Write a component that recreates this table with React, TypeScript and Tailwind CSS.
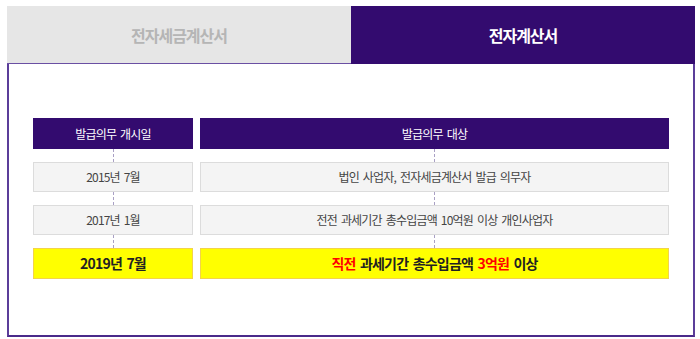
import React from "react";

const font = { fontFamily: '"Noto Sans CJK KR", "Noto Sans", sans-serif' };

function Connector({ left }: { left: boolean }) {
  return (
    <div className="flex h-[13px] gap-[7px]">
      <div className="flex w-[160px] justify-center">
        {left && <div className="h-full border-l border-dashed border-[#a9a0c4]" />}
      </div>
      <div className="flex flex-1 justify-center">
        <div className="h-full border-l border-dashed border-[#a9a0c4]" />
      </div>
    </div>
  );
}

function Row({ date, target }: { date: string; target: string }) {
  return (
    <div className="flex h-[30px] gap-[7px] text-[12px] tracking-[-0.8px] [word-spacing:2px] text-[#444]">
      <div className="flex w-[160px] items-center justify-center border border-[#dcdcdc] bg-[#f4f4f4]">
        {date}
      </div>
      <div className="flex flex-1 items-center justify-center border border-[#dcdcdc] bg-[#f4f4f4]">
        {target}
      </div>
    </div>
  );
}

export default function App() {
  return (
    <div className="h-[339px] w-[700px] bg-white pt-[6px] pl-[7px] pr-[5px]" style={font}>
      <div className="flex h-[58px]">
        <div className="flex flex-1 items-center justify-center border-b border-[#6a4fa3] bg-[#e6e6e6] text-[16px] font-bold tracking-[-1px] text-[#b5b5b5]">
          전자세금계산서
        </div>
        <div className="flex flex-1 items-center justify-center bg-[#330b6f] text-[16px] font-bold tracking-[-1px] text-white">
          전자계산서
        </div>
      </div>
      <div className="h-[273px] border-x-2 border-b-2 border-[#4a2a8a] border-x-[#5b3d99] px-[24px] pt-[54px]">
        <div className="flex h-[31px] gap-[7px] text-[12px] tracking-[-0.8px] [word-spacing:2px] text-white">
          <div className="flex w-[160px] items-center justify-center bg-[#330b6f]">발급의무 개시일</div>
          <div className="flex flex-1 items-center justify-center bg-[#330b6f]">발급의무 대상</div>
        </div>
        <Connector left />
        <Row date="2015년 7월" target="법인 사업자, 전자세금계산서 발급 의무자" />
        <Connector left />
        <Row date="2017년 1월" target="전전 과세기간 총수입금액 10억원 이상 개인사업자" />
        <Connector left />
        <div className="flex h-[31px] gap-[7px] text-[14px] font-bold tracking-[-0.8px] [word-spacing:2px] text-[#222]">
          <div className="flex w-[160px] items-center justify-center border border-[#f3d34a] bg-[#ffff00]">
            2019년 7월
          </div>
          <div className="flex flex-1 items-center justify-center border border-[#f3d34a] bg-[#ffff00]">
            <span className="text-[#ff0000]">직전</span>
            <span className="whitespace-pre"> 과세기간 총수입금액 </span>
            <span className="text-[#ff0000]">3억원</span>
            <span className="whitespace-pre"> 이상</span>
          </div>
        </div>
      </div>
    </div>
  );
}
